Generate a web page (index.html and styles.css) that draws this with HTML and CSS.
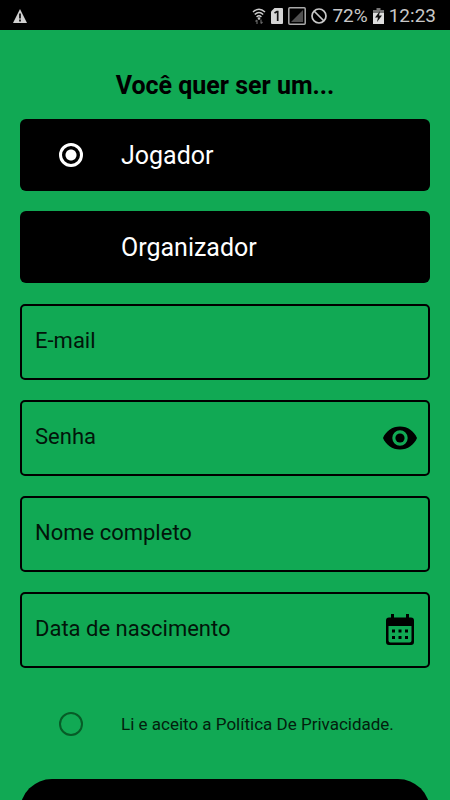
FILE: index.html
```html
<!DOCTYPE html>
<html lang="pt-BR">
<head>
<meta charset="utf-8">
<meta name="viewport" content="width=device-width, initial-scale=1">
<title>Cadastro</title>
<link rel="stylesheet" href="styles.css">
</head>
<body>
<header class="status-bar">
  <svg class="warning" width="16" height="16" viewBox="0 0 16 16"><path d="M8 1 15 15H1Z" fill="#d0d0d0"/><path d="M8 5.500v5M8 11.500v2" stroke="#222" stroke-width="2"/></svg>
  <div class="status-icons">
    <svg width="14" height="18" viewBox="0 0 14 18" fill="none" stroke="#ccc" stroke-width="1.500"><path d="M1 5Q7-.5 13 5M2.800 7.500q4.200-4 8.400 0M4.600 10q2.400-2.400 4.800 0"/><circle cx="7" cy="11.500" r=".6" fill="#ccc"/><path d="M5 17v-4M3.500 14.500 5 13M9 12.500v4M10.500 15 9 16.500" stroke="#666" stroke-width="1.200"/></svg>
    <svg class="sim" width="12" height="16" viewBox="0 0 12 16"><path d="M3.500 0H11q1 0 1 1v14q0 1-1 1H1q-1 0-1-1V3.500Z" fill="#d4d4d4"/><path d="m3.500 5 2.500-1.500h.7V13" fill="none" stroke="#111" stroke-width="1.700"/></svg>
    <svg class="signal" width="18" height="18" viewBox="0 0 18 18"><rect x=".8" y=".8" width="16.400" height="16.400" rx="1" fill="none" stroke="#aaa" stroke-width="1.500"/><path d="M15 3v12H3Z" fill="#505050"/></svg>
    <svg class="blocked" width="16" height="16" viewBox="0 0 16 16" fill="none" stroke="#c8c8c8" stroke-width="1.700"><circle cx="8" cy="8" r="7"/><path d="m3 3 10 10"/></svg>
    <span>72%</span>
    <svg class="battery" width="11" height="16" viewBox="0 0 11 16"><path d="M3.500 0h4v2H11v4H0V2h3.500Z" fill="#777"/><path d="M0 5h11v11H0Z" fill="#ddd"/><path d="M7 3 2 9.500h3L4 14l5-6.500H6Z" fill="#111"/></svg>
    <span>12:23</span>
  </div>
</header>
<main class="content">
  <form class="form">
    <h1 class="title" id="role-title">Você quer ser um...</h1>
    <div class="choices" role="radiogroup" aria-labelledby="role-title">
      <label class="choice"><input class="radio" type="radio" name="role" checked><span>Jogador</span></label>
      <label class="choice"><input class="radio" type="radio" name="role"><span>Organizador</span></label>
    </div>
    <div class="fields">
      <div class="field"><input class="field-input" type="email" placeholder="E-mail" aria-label="E-mail"></div>
      <div class="field">
        <input class="field-input" type="password" placeholder="Senha" aria-label="Senha">
        <button class="icon-button" type="button" aria-label="Mostrar senha">
          <svg width="34" height="24" viewBox="0 0 34 24"><path fill-rule="evenodd" d="M17 .5C9.300.5 2.700 5.300 0 12c2.700 6.700 9.300 11.500 17 11.500S31.300 18.700 34 12C31.300 5.300 24.700.5 17 .5Zm0 19.200a7.700 7.700 0 1 1 0-15.400 7.700 7.700 0 0 1 0 15.400Z"/><circle cx="17" cy="12" r="4.600"/></svg>
        </button>
      </div>
      <div class="field"><input class="field-input" type="text" placeholder="Nome completo" aria-label="Nome completo"></div>
      <div class="field">
        <input class="field-input" type="text" placeholder="Data de nascimento" aria-label="Data de nascimento">
        <button class="icon-button" type="button" aria-label="Escolher data">
          <svg width="34" height="32" viewBox="0 0 34 32"><path fill-rule="evenodd" d="M8 0h3v3.500h12V0h3v3.500h2q3 0 3 3V28q0 3-3 3H6q-3 0-3-3V6.500q0-3 3-3h2ZM5.500 12v14.500q0 2 2 2h19q2 0 2-2V12Z"/><path d="M9 15.500h3v3H9zm6.500 0h3v3h-3zm6.500 0h3v3h-3zM9 22h3v3H9zm6.500 0h3v3h-3zm6.500 0h3v3h-3z"/></svg>
        </button>
      </div>
    </div>
    <label class="terms"><input class="terms-check" type="checkbox"><span>Li e aceito a Política De Privacidade.</span></label>
    <button class="submit" type="submit" aria-label="Cadastrar"></button>
  </form>
</main>
</body>
</html>
```
FILE: styles.css
```css
* { box-sizing: border-box; }

body {
  margin: 0;
  height: 100vh;
  display: flex;
  flex-direction: column;
  background: #11a954;
  color: #000;
  font-family: Roboto, "Liberation Sans", sans-serif;
}

.status-bar {
  flex: none;
  display: flex;
  align-items: center;
  justify-content: space-between;
  height: 30px;
  padding: 2px 14px 0 12px;
  background: #000;
  color: #c8c8c8;
  font-size: 19px;
  line-height: 28px;
}

.status-icons {
  display: flex;
  align-items: center;
  gap: 5px;
}

.content {
  flex: 1;
  min-height: 0;
  overflow-y: auto;
  scrollbar-width: none;
}

.form {
  display: flex;
  flex-direction: column;
  padding: 41px 20px 20px;
}

.title {
  margin: 0 0 18px;
  font-size: 25px;
  line-height: 30px;
  font-weight: 700;
  text-align: center;
}

.choices,
.fields {
  display: flex;
  flex-direction: column;
  gap: 20px;
}

.choices { margin-bottom: 21px; }

.choice,
.terms {
  display: flex;
  align-items: center;
  gap: 38px;
  padding: 0 20px 0 39px;
}

.choice {
  height: 72px;
  border-radius: 6px;
  background: #000;
  color: #fff;
  font-size: 25px;
}

.radio,
.terms-check {
  appearance: none;
  flex: none;
  width: 24px;
  height: 24px;
  margin: 0;
  border-radius: 50%;
}

.radio:checked {
  border: 3px solid #fff;
  background: radial-gradient(circle, #fff 5px, transparent 6px);
}

.field {
  display: flex;
  align-items: center;
  height: 76px;
  padding: 0 11px 0 13px;
  border: 2px solid #000;
  border-radius: 5px;
}

.field-input {
  flex: 1;
  min-width: 0;
  height: 100%;
  padding: 0 0 4px;
  border: 0;
  outline: 0;
  background: none;
  font: inherit;
  font-size: 22px;
}

.field-input::placeholder {
  color: #02150a;
  opacity: 1;
}

.icon-button {
  display: flex;
  flex: none;
  padding: 0;
  border: 0;
  background: none;
  color: #000;
}

.terms {
  height: 72px;
  margin: 20px 0 19px;
  color: #03200d;
  font-size: 17px;
  white-space: nowrap;
}

.terms-check { border: 2px solid #075c27; }

.terms-check:checked { background: radial-gradient(circle, #000 5px, transparent 6px); }

.submit {
  flex: none;
  height: 72px;
  border: 0;
  border-radius: 32px;
  background: #000;
}
```
